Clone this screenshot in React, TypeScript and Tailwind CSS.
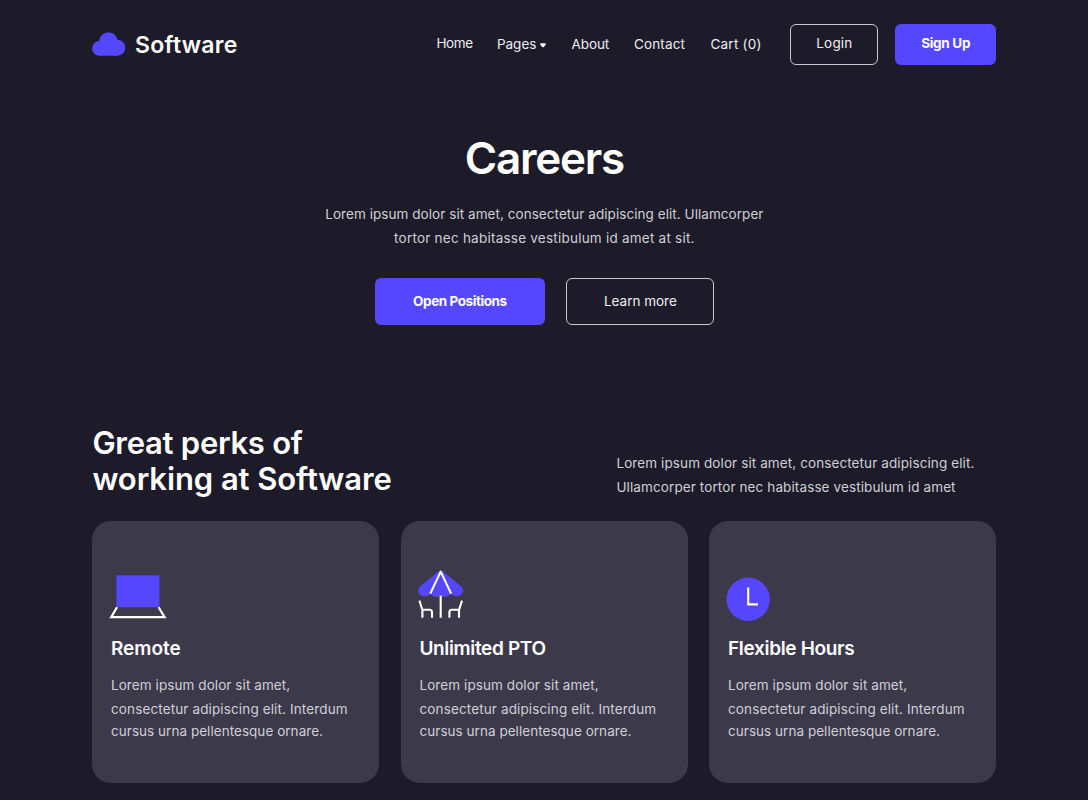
import type { ReactNode } from "react";

function CloudLogo() {
  return (
    <svg width="34" height="24" viewBox="0 0 34 24" fill="#5546ff" className="-mt-[0.5px]" aria-hidden="true">
      <circle cx="16.4" cy="9.3" r="9.1" />
      <circle cx="7.5" cy="16.3" r="7.4" />
      <circle cx="25.3" cy="15.7" r="8" />
      <rect x="7.5" y="11" width="17.8" height="12.7" />
    </svg>
  );
}

function LaptopIcon() {
  return (
    <svg width="60" height="52" viewBox="0 0 60 52" fill="none" aria-hidden="true">
      <rect x="7.4" y="5.3" width="43" height="32" fill="#5546ff" />
      <path d="M8 37.2 L2.2 47.2 H55.6 L49.6 37.2" stroke="#fff" strokeWidth="2.2" />
    </svg>
  );
}

function UmbrellaIcon() {
  return (
    <svg width="60" height="52" viewBox="0 0 60 52" fill="none" aria-hidden="true">
      <path
        d="M23.7 .9 C26.2 .9 27 2.2 29 4 L43.5 15.8 C46 17.9 46.6 20.6 45.8 22.6 C44.2 26.8 37.8 27.6 34 24 C31.4 27.4 26.3 27.6 23.7 25.2 C21.1 27.6 16 27.4 13.4 24 C9.6 27.6 3.2 26.8 1.6 22.6 C.8 20.6 1.4 17.9 3.9 15.8 L18.4 4 C20.4 2.2 21.2 .9 23.7 .9 Z"
        fill="#5546ff"
      />
      <g stroke="#fff" strokeWidth="2.1" strokeLinejoin="round">
        <path d="M13.3 23.6 L23.7 1.6 L34.1 23.6" />
        <path d="M23.7 25.6 V47.8" />
        <path d="M2.4 30.6 L5.4 40 V47.8 M4.8 39.7 H12.4 C14.2 39.7 15 40.6 15 42.2 V47.8" />
        <path d="M45 30.6 L42 40 V47.8 M42.6 39.7 H35 C33.2 39.7 32.4 40.6 32.4 42.2 V47.8" />
      </g>
    </svg>
  );
}

function ClockIcon() {
  return (
    <svg width="60" height="52" viewBox="0 0 60 52" fill="none" aria-hidden="true">
      <circle cx="22.2" cy="29.3" r="21.7" fill="#5546ff" />
      <path d="M22.2 17.4 V34.4 H32" stroke="#fff" strokeWidth="2.1" />
    </svg>
  );
}

function PerkCard({ icon, title, spacing }: { icon: ReactNode; title: string; spacing: string }) {
  return (
    <article className="h-[262px] rounded-[19px] bg-[#3c394b] pt-[49.5px] pl-[18.6px] whitespace-nowrap">
      <div className="-ml-[2px] h-[52px]">{icon}</div>
      <h3 className={`mt-[15px] text-[19px] leading-6 font-semibold ${spacing}`}>{title}</h3>
      <p className="mt-3 text-[13.5px] leading-6 text-[#d0cfd5]">
        <span className="block tracking-[0.08px]">Lorem ipsum dolor sit amet,</span>
        <span className="block tracking-[0.13px]">consectetur adipiscing elit. Interdum</span>
        <span className="block leading-5 tracking-[0.04px]">cursus urna pellentesque ornare.</span>
      </p>
    </article>
  );
}

export default function App() {
  return (
    <div className="h-[800px] w-[1088px] overflow-hidden bg-[#1d1b29] pr-[91.6px] pl-[92.4px] font-[Inter,sans-serif] text-white">
      <header className="flex h-[88.5px] items-center justify-between whitespace-nowrap">
        <a className="-ml-[0.4px] flex items-center gap-[9px] pt-[0.8px]">
          <CloudLogo />
          <span className="text-[23px] leading-7 font-semibold tracking-[0.3px]">Software</span>
        </a>
        <div className="flex items-center">
          <nav className="-mt-[1.5px] grid grid-cols-[60.5px_74.5px_62.5px_76.5px_79.5px] text-[13.5px] leading-5 text-[#eeeef1]">
            <a className="-mt-px tracking-[-0.4px]">Home</a>
            <a className="flex items-center gap-[3.5px]">
              Pages
              <svg width="6" height="5" viewBox="0 0 6 5" className="mt-[4px]" aria-hidden="true">
                <path d="M1 .3 H5 C6.2 .3 6 1.6 5.4 2.2 L3.6 4.1 C3.2 4.5 2.8 4.5 2.4 4.1 L.6 2.2 C0 1.6 -.2 .3 1 .3 Z" fill="#fff" />
              </svg>
            </a>
            <a className="tracking-[-0.05px]">About</a>
            <a className="tracking-[0.16px]">Contact</a>
            <a className="tracking-[0.25px]">Cart (0)</a>
          </nav>
          <button className="h-[41px] w-[88px] rounded-[6px] border border-[#c9c8ce] pb-[3px] pl-px text-[13.5px] tracking-[0.2px] text-[#eeeef1]">
            Login
          </button>
          <button className="ml-[17px] h-[41px] w-[101.5px] rounded-[6px] bg-[#5546ff] pb-[3px] text-[13.5px] font-bold tracking-[-0.3px]">
            Sign Up
          </button>
        </div>
      </header>

      <section className="flex flex-col items-center pt-[45px] whitespace-nowrap">
        <h1 className="text-[44px] leading-[48px] font-semibold tracking-[-1.25px]">Careers</h1>
        <p className="mt-[20.5px] text-center text-[13.5px] leading-6 text-[#d0cfd5]">
          <span className="block tracking-[0.055px]">
            Lorem ipsum dolor sit amet, consectetur adipiscing elit. Ullamcorper
          </span>
          <span className="block tracking-[0.23px]">tortor nec habitasse vestibulum id amet at sit.</span>
        </p>
        <div className="mt-7 flex gap-[21px] text-[13.5px]">
          <button className="h-[47px] w-[170px] rounded-[6px] bg-[#5546ff] pb-px font-bold tracking-[-0.42px]">
            Open Positions
          </button>
          <button className="h-[47px] w-[148px] rounded-[6px] border border-[#c9c8ce] pb-px pl-px text-[#eeeef1]">
            Learn more
          </button>
        </div>
      </section>

      <section className="pt-[99.5px]">
        <div className="flex items-end justify-between whitespace-nowrap">
          <h2 className="text-[31px] leading-9 font-semibold">
            <span className="block tracking-[-0.27px]">Great perks of</span>
            <span className="block tracking-[-0.08px]">working at Software</span>
          </h2>
          <p className="-mb-[2px] w-[380px] text-[13.5px] leading-6 text-[#d0cfd5]">
            <span className="block tracking-[0.1px]">Lorem ipsum dolor sit amet, consectetur adipiscing elit.</span>
            <span className="block tracking-[0.11px]">Ullamcorper tortor nec habitasse vestibulum id amet</span>
          </p>
        </div>
        <div className="mt-6 grid grid-cols-3 gap-[21.5px]">
          <PerkCard icon={<LaptopIcon />} title="Remote" spacing="tracking-[-0.03px]" />
          <PerkCard icon={<UmbrellaIcon />} title="Unlimited PTO" spacing="tracking-[-0.36px]" />
          <PerkCard icon={<ClockIcon />} title="Flexible Hours" spacing="tracking-[-0.32px]" />
        </div>
      </section>
    </div>
  );
}
